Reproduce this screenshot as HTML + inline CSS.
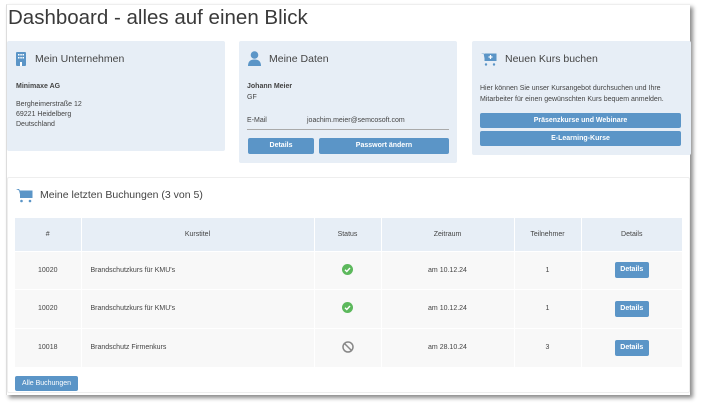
<!DOCTYPE html>
<html><head><meta charset="utf-8"><style>
*{margin:0;padding:0;box-sizing:border-box}
body{width:706px;height:408px;background:#fff;font-family:"Liberation Sans",sans-serif;color:#333;position:relative;overflow:hidden}
.frame{position:absolute;left:6px;top:4px;width:684px;height:391px;background:#fff;border-left:1px solid #ddd;border-top:1px solid #eee;box-shadow:3px 3px 4px rgba(0,0,0,.45)}
.a{position:absolute}
h1{position:absolute;left:8px;top:6px;font-size:20.5px;font-weight:normal;color:#3a3a3a;white-space:nowrap}
.card{position:absolute;background:#e7eef6;border-radius:2px}
.ct{position:absolute;font-size:10.5px;color:#444;white-space:nowrap}
.s{font-size:7px;color:#444;position:absolute;white-space:nowrap;line-height:10px}
.btn{position:absolute;background:#5b95c7;color:#fff;font-size:7px;text-align:center;border-radius:2px;font-weight:bold}
table{position:absolute;left:15px;top:218px;width:667px;border-collapse:collapse;font-size:7px;color:#444}
th{background:#e7eef6;height:33px;font-weight:normal;border-right:1px solid #fff}
td{background:#f8f8f8;height:38.5px;text-align:center;border-right:1px solid #fff;border-top:1px solid #fff;vertical-align:middle}
</style></head><body>
<div class="frame"></div>
<h1>Dashboard - alles auf einen Blick</h1>

<div class="card" style="left:7px;top:41px;width:218px;height:110px"></div>
<svg class="a" style="left:16px;top:52px" width="10" height="14" viewBox="0 0 10 14"><rect width="10" height="14" rx="1" fill="#5b95c7"/><g fill="#fff"><rect x="2" y="2" width="1.5" height="1.5"/><rect x="4.3" y="2" width="1.5" height="1.5"/><rect x="6.5" y="2" width="1.5" height="1.5"/><rect x="2" y="5" width="1.5" height="1.5"/><rect x="4.3" y="5" width="1.5" height="1.5"/><rect x="6.5" y="5" width="1.5" height="1.5"/><rect x="4" y="10" width="2" height="4"/></g></svg>
<div class="ct" style="left:35px;top:53px">Mein Unternehmen</div>
<div class="s" style="left:16px;top:82px;font-weight:bold">Minimaxe AG</div>
<div class="s" style="left:16px;top:100px">Bergheimerstraße 12<br>69221 Heidelberg<br>Deutschland</div>

<div class="card" style="left:239px;top:41px;width:218px;height:122px"></div>
<svg class="a" style="left:248px;top:51px" width="13" height="15" viewBox="0 0 13 15"><circle cx="6.5" cy="4" r="3.8" fill="#5b95c7"/><path d="M0 15 Q0 8.5 6.5 8.5 Q13 8.5 13 15Z" fill="#5b95c7"/></svg>
<div class="ct" style="left:269px;top:53px">Meine Daten</div>
<div class="s" style="left:247px;top:82px;font-weight:bold">Johann Meier</div>
<div class="s" style="left:247px;top:93px">GF</div>
<div class="s" style="left:247px;top:116px">E-Mail</div>
<div class="s" style="left:307px;top:116px">joachim.meier@semcosoft.com</div>
<div class="a" style="left:247px;top:129px;width:202px;height:1px;background:#aaa"></div>
<div class="btn" style="left:248px;top:138px;width:66px;height:16px;line-height:16px">Details</div>
<div class="btn" style="left:319px;top:138px;width:130px;height:16px;line-height:16px">Passwort ändern</div>

<div class="card" style="left:472px;top:41px;width:219px;height:114px"></div>
<svg class="a" style="left:481px;top:52px" width="16" height="14" viewBox="0 0 16 14"><path d="M0 1h2.5l1.5 8h10l1.5-7H4" fill="#5b95c7"/><rect x="3.5" y="1.5" width="12" height="7.5" fill="#5b95c7"/><path d="M9.5 3v4M7.5 5h4" stroke="#fff" stroke-width="1.2"/><circle cx="5" cy="12.5" r="1.2" fill="#5b95c7"/><circle cx="13" cy="12.5" r="1.2" fill="#5b95c7"/></svg>
<div class="ct" style="left:505px;top:53px">Neuen Kurs buchen</div>
<div class="s" style="left:480px;top:83px;line-height:11px">Hier können Sie unser Kursangebot durchsuchen und Ihre<br>Mitarbeiter für einen gewünschten Kurs bequem anmelden.</div>
<div class="btn" style="left:480px;top:113px;width:201px;height:15px;line-height:15px">Präsenzkurse und Webinare</div>
<div class="btn" style="left:480px;top:131px;width:201px;height:15px;line-height:15px">E-Learning-Kurse</div>

<div class="a" style="left:7px;top:177px;width:683px;height:216px;border:1px solid #eee;border-radius:2px"></div>
<svg class="a" style="left:16px;top:188px" width="17" height="15" viewBox="0 0 17 15"><path d="M0 1h3l1.2 2H16.5l-1.8 7H5L3 2.5" fill="#5b95c7"/><rect x="4" y="2.5" width="12.5" height="7.5" fill="#5b95c7"/><circle cx="5.5" cy="13" r="1.3" fill="#5b95c7"/><circle cx="14" cy="13" r="1.3" fill="#5b95c7"/></svg>
<div class="ct" style="left:40px;top:189px">Meine letzten Buchungen (3 von 5)</div>

<table>
<tr><th style="width:66px">#</th><th style="width:233px">Kurstitel</th><th style="width:67px">Status</th><th style="width:133px">Zeitraum</th><th style="width:67px">Teilnehmer</th><th style="border-right:0">Details</th></tr>
<tr><td>10020</td><td style="text-align:left;padding-left:9px">Brandschutzkurs für KMU's</td><td><svg width="11" height="11" viewBox="0 0 11 11"><circle cx="5.5" cy="5.5" r="5.5" fill="#5cb85c"/><path d="M3 5.7l1.8 1.8L8 4" stroke="#fff" stroke-width="1.4" fill="none"/></svg></td><td>am 10.12.24</td><td>1</td><td style="border-right:0"><span class="btn" style="position:static;display:inline-block;width:34px;height:16px;line-height:16px;vertical-align:middle">Details</span></td></tr>
<tr><td>10020</td><td style="text-align:left;padding-left:9px">Brandschutzkurs für KMU's</td><td><svg width="11" height="11" viewBox="0 0 11 11"><circle cx="5.5" cy="5.5" r="5.5" fill="#5cb85c"/><path d="M3 5.7l1.8 1.8L8 4" stroke="#fff" stroke-width="1.4" fill="none"/></svg></td><td>am 10.12.24</td><td>1</td><td style="border-right:0"><span class="btn" style="position:static;display:inline-block;width:34px;height:16px;line-height:16px;vertical-align:middle">Details</span></td></tr>
<tr><td>10018</td><td style="text-align:left;padding-left:9px">Brandschutz Firmenkurs</td><td><svg width="12" height="12" viewBox="0 0 12 12"><circle cx="6" cy="6" r="5" stroke="#888" stroke-width="1.5" fill="none"/><path d="M2.6 2.6l6.8 6.8" stroke="#888" stroke-width="1.5"/></svg></td><td>am 28.10.24</td><td>3</td><td style="border-right:0"><span class="btn" style="position:static;display:inline-block;width:34px;height:16px;line-height:16px;vertical-align:middle">Details</span></td></tr>
</table>
<div class="btn" style="left:15px;top:376px;width:63px;height:15px;line-height:15px;font-weight:normal">Alle Buchungen</div>
</body></html>
